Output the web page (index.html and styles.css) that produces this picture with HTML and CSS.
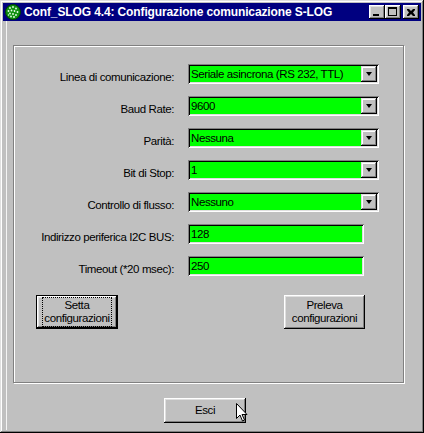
FILE: index.html
```html
<!DOCTYPE html>
<html>
<head>
<meta charset="utf-8">
<link rel="stylesheet" href="styles.css">
</head>
<body>
<div class="window">
  <div class="titlebar">
    <svg class="appicon" width="16" height="16" viewBox="0 0 16 16">
      <circle cx="8" cy="8" r="7.5" fill="#109010" stroke="#004000" stroke-width="1"/>
      <g fill="#e8ffe8">
        <circle cx="5" cy="4" r="0.9"/><circle cx="8" cy="3" r="0.9"/><circle cx="11" cy="4.5" r="0.9"/>
        <circle cx="3.5" cy="7" r="0.9"/><circle cx="6.5" cy="6.5" r="0.9"/><circle cx="9.5" cy="7" r="0.9"/><circle cx="12.5" cy="8" r="0.9"/>
        <circle cx="5" cy="9.5" r="0.9"/><circle cx="8" cy="10" r="0.9"/><circle cx="11" cy="11" r="0.9"/>
        <circle cx="6" cy="12.5" r="0.9"/><circle cx="9" cy="13" r="0.9"/><circle cx="3.5" cy="11" r="0.7"/>
      </g>
    </svg>
    <span class="title">Conf_SLOG 4.4: Configurazione comunicazione S-LOG</span>
    <div class="capbtns">
      <div class="capbtn"><span class="g-min"></span></div>
      <div class="capbtn"><span class="g-max"></span></div>
      <div class="capbtn close">
        <svg width="8" height="7" viewBox="0 0 8 7"><path d="M0 0h2l2 2 2-2h2v1l-2 2.5 2 2.5v1h-2l-2-2-2 2h-2v-1l2-2.5-2-2.5z" fill="#000"/></svg>
      </div>
    </div>
  </div>
  <div class="client">
    <div class="groupbox">
      <div class="form">
        <label class="lbl">Linea di comunicazione:</label>
        <div class="field combo"><span class="val">Seriale asincrona (RS 232, TTL)</span><span class="drop"><i></i></span></div>

        <label class="lbl">Baud Rate:</label>
        <div class="field combo"><span class="val">9600</span><span class="drop"><i></i></span></div>

        <label class="lbl">Parità:</label>
        <div class="field combo"><span class="val">Nessuna</span><span class="drop"><i></i></span></div>

        <label class="lbl">Bit di Stop:</label>
        <div class="field combo"><span class="val">1</span><span class="drop"><i></i></span></div>

        <label class="lbl">Controllo di flusso:</label>
        <div class="field combo"><span class="val">Nessuno</span><span class="drop"><i></i></span></div>

        <label class="lbl">Indirizzo periferica I2C BUS:</label>
        <div class="field text"><span class="val">128</span></div>

        <label class="lbl">Timeout (*20 msec):</label>
        <div class="field text"><span class="val">250</span></div>
      </div>
      <div class="actions">
        <div class="btn default"><span class="focus">Setta<br>configurazioni</span></div>
        <div class="btn">Preleva<br>configurazioni</div>
      </div>
    </div>
    <div class="bottom">
      <div class="btn exit">Esci</div>
      <svg class="cursor" width="12" height="20" viewBox="0 0 12 20">
        <path d="M0.5 0.5v15l3.5-3.5 2.5 6 2-1-2.5-5.5h5z" fill="#fff" stroke="#000" stroke-width="1"/>
      </svg>
    </div>
  </div>
</div>
</body>
</html>
```
FILE: styles.css
```css
html, body {
  margin: 0;
  padding: 0;
  background: #c0c0c0;
}
body {
  width: 424px;
  height: 433px;
  overflow: hidden;
  font-family: "Liberation Sans", Arial, sans-serif;
  font-size: 11.5px;
  letter-spacing: -0.4px;
  color: #000;
}
.window {
  box-sizing: border-box;
  width: 424px;
  height: 433px;
  padding: 3px;
  background: #c0c0c0;
  box-shadow: inset -1px -1px #000, inset 1px 1px #dfdfdf, inset -2px -2px #808080, inset 2px 2px #fff;
  display: flex;
  flex-direction: column;
}
.titlebar {
  height: 18px;
  background: #000080;
  display: flex;
  align-items: center;
  padding: 0 2px;
  color: #fff;
}
.appicon {
  display: block;
  flex: none;
}
.title {
  margin-left: 3px;
  font-weight: bold;
  font-size: 12px;
  letter-spacing: -0.12px;
  white-space: nowrap;
}
.capbtns {
  margin-left: auto;
  display: flex;
  gap: 0;
}
.capbtn {
  width: 16px;
  height: 14px;
  box-sizing: border-box;
  background: #c0c0c0;
  box-shadow: inset -1px -1px #000, inset 1px 1px #fff, inset -2px -2px #808080, inset 2px 2px #dfdfdf;
  position: relative;
  display: flex;
  align-items: center;
  justify-content: center;
}
.capbtn.close {
  margin-left: 2px;
}
.g-min {
  position: absolute;
  left: 4px;
  top: 9px;
  width: 6px;
  height: 2px;
  background: #000;
}
.g-max {
  position: absolute;
  left: 3px;
  top: 2px;
  width: 9px;
  height: 9px;
  box-sizing: border-box;
  border: 1px solid #000;
  border-top-width: 2px;
}
.client {
  flex: 1;
  display: flex;
  flex-direction: column;
  background: linear-gradient(to right, transparent 3px, #f4f4f4 3px, #f4f4f4 4px, transparent 4px);
}
.groupbox {
  margin: 24px 0 0 10px;
  width: 391px;
  height: 338px;
  box-sizing: border-box;
  border: 1px solid #808080;
  box-shadow: inset 1px 1px #fff, 1px 1px #fff;
}
.form {
  display: grid;
  grid-template-columns: 159px 191px;
  column-gap: 14px;
  row-gap: 12px;
  grid-auto-rows: 20px;
  padding: 18px 0 0 1px;
}
.lbl {
  align-self: end;
  text-align: right;
  line-height: 13px;
  white-space: nowrap;
}
.field {
  box-sizing: border-box;
  height: 20px;
  background: #00ff00;
  box-shadow: inset 1px 1px #808080, inset -1px -1px #fff, inset 2px 2px #000, inset -2px -2px #dfdfdf;
  display: flex;
  align-items: center;
  padding: 2px;
}
.field.text {
  width: 176px;
}
.val {
  flex: 1;
  padding-left: 1px;
  line-height: 16px;
  white-space: nowrap;
  overflow: hidden;
}
.drop {
  width: 16px;
  height: 16px;
  box-sizing: border-box;
  background: #c0c0c0;
  box-shadow: inset -1px -1px #000, inset 1px 1px #dfdfdf, inset -2px -2px #808080, inset 2px 2px #fff;
  display: flex;
  align-items: center;
  justify-content: center;
}
.drop i {
  display: block;
  width: 0;
  height: 0;
  border-left: 3.5px solid transparent;
  border-right: 3.5px solid transparent;
  border-top: 4px solid #000;
}
.actions {
  display: flex;
  justify-content: space-between;
  padding: 19px 38px 0 22px;
}
.btn {
  box-sizing: border-box;
  width: 81px;
  height: 34px;
  background: #c0c0c0;
  box-shadow: inset -1px -1px #000, inset 1px 1px #fff, inset -2px -2px #808080, inset 2px 2px #dfdfdf;
  display: flex;
  align-items: center;
  justify-content: center;
  text-align: center;
  line-height: 13px;
}
.btn.default {
  width: 82px;
  border: 1px solid #000;
  box-shadow: inset -1px -1px #000, inset 1px 1px #fff, inset -2px -2px #808080, inset 2px 2px #dfdfdf;
}
.focus {
  display: block;
  outline: 1px dotted #000;
  outline-offset: 0;
  padding: 1px 1px;
  width: 68px;
  box-sizing: border-box;
}
.bottom {
  position: relative;
  padding: 15px 0 0 161px;
}
.btn.exit {
  width: 82px;
  height: 25px;
}
.cursor {
  position: absolute;
  left: 233px;
  top: 20px;
}
```
